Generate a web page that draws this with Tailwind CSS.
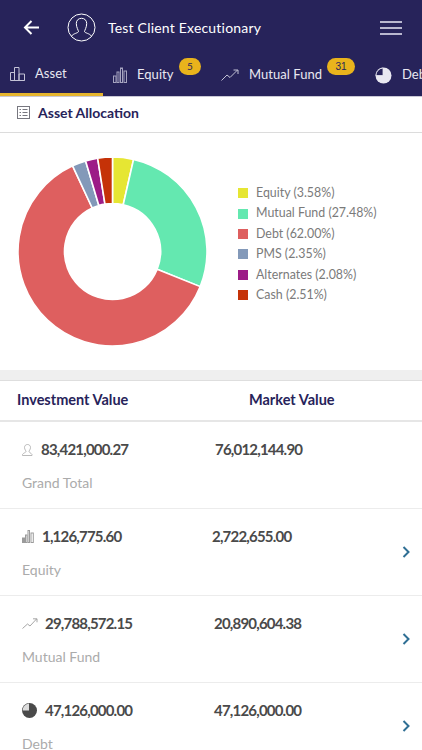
<!DOCTYPE html>
<html>
<head>
<meta charset="utf-8">
<script src="https://cdn.jsdelivr.net/npm/@tailwindcss/browser@4"></script>
</head>
<body class="bg-white font-['Lato',sans-serif] overflow-hidden">
<div class="w-[422px] h-[750px] overflow-hidden flex flex-col">
  <header class="h-[97px] shrink-0 bg-[#27235a] border-b border-[#c9c8d6] flex flex-col">
    <div class="h-[55px] flex items-center pl-[23px] pr-[20px] text-white">
      <svg class="w-[17px] h-[17px] mr-[27px]" viewBox="0 0 17 17" fill="none" stroke="#fff" stroke-width="2"><path d="M16 8.500H2M8.500 2L2 8.500L8.500 15"/></svg>
      <svg class="w-[29px] h-[29px] mr-[12px]" viewBox="0 0 29 29" fill="none" stroke="#fff" stroke-width="1"><circle cx="14.500" cy="14.500" r="13.500"/><path d="M11.500 18.500c0-1-2.200-4-2.200-8 0-3.200 2.200-5.200 5.200-5.200s5.200 2 5.200 5.200c0 4-2.200 7-2.200 8 0 1.500 5.500 2 6.800 4.500M11.500 18.500c0 1.500-5.500 2-6.800 4.500"/></svg>
      <span class="text-[14px] tracking-[0.2px] flex-1 whitespace-nowrap">Test Client Executionary</span>
      <div class="w-[22px] flex flex-col gap-[4px]">
        <div class="h-[2px] bg-[#b9b7cf]"></div><div class="h-[2px] bg-[#b9b7cf]"></div><div class="h-[2px] bg-[#b9b7cf]"></div>
      </div>
    </div>
    <nav class="h-[41px] flex text-[#e9e8f1] text-[13px] tracking-[0.05px] whitespace-nowrap overflow-hidden">
      <div class="w-[103px] shrink-0 h-full border-b-[3px] border-[#e6b52e] flex items-center pl-[10px] pb-[1px]">
        <svg class="w-[15px] h-[15px] mr-[10px]" viewBox="0 0 15 15" fill="none" stroke="#c4c3d6" stroke-width="1"><path d="M.5 14.500v-8h4v8M4.500 14.500V1.500h4.500v13M9 14.500V8h5.500v6.500zM.5 14.500h14"/></svg>
        <span>Asset</span>
      </div>
      <div class="w-[117px] shrink-0 flex items-center relative pl-[10px] pb-[1px]">
        <svg class="w-[14px] h-[16px] mr-[10px]" viewBox="0 0 14 16" fill="none" stroke="#a6a4c0" stroke-width="1"><rect x=".5" y="9" width="2.500" height="6.500"/><rect x="4" y="5" width="2" height="10.500"/><rect x="7.500" y="1" width="2" height="14.500"/><rect x="11" y="4" width="2.500" height="11.500"/></svg>
        <span>Equity</span>
        <span class="absolute left-[76px] top-[3px] w-[22px] h-[17px] rounded-full bg-[#e9b31c] text-[#27235a] text-[10px] tracking-normal flex items-center justify-center">5</span>
      </div>
      <div class="w-[155px] shrink-0 flex items-center relative pl-[1px] pb-[1px]">
        <svg class="w-[18px] h-[12px] mr-[10px]" viewBox="0 0 18 12" fill="none" stroke="#c4c3d6" stroke-width="1"><path d="M.5 11.500L6 6l3 2.500L16.500 1M12.500 1h4.500v4"/></svg>
        <span>Mutual Fund</span>
        <span class="absolute left-[107px] top-[3px] w-[28px] h-[17px] rounded-full bg-[#e9b31c] text-[#27235a] text-[10px] tracking-normal flex items-center justify-center font-['Liberation_Sans',sans-serif]">31</span>
      </div>
      <div class="shrink-0 flex items-center pb-[1px]">
        <svg class="w-[17px] h-[17px] mr-[10px]" viewBox="0 0 17 17"><circle cx="8.500" cy="8.500" r="8" fill="#e9e8f1"/><path d="M8 1v7.500H1A7.500 7.500 0 0 1 8 1z" fill="#27235a" stroke="#e9e8f1" stroke-width=".8"/></svg>
        <span>Debt</span>
      </div>
    </nav>
  </header>

  <section class="h-[36px] shrink-0 border-b border-[#dcdcdc] flex items-center pl-[17px] pb-[4px]">
    <svg class="w-[13px] h-[13px] mr-[8px]" viewBox="0 0 13 13" fill="none" stroke="#77777f" stroke-width="1"><rect x=".5" y=".5" width="12" height="12"/><path d="M2.500 3.500h1.500M5.500 3.500h5M2.500 6.500h1.500M5.500 6.500h5M2.500 9.500h1.500M5.500 9.500h5"/></svg>
    <h2 class="text-[14px] font-bold text-[#27235a]">Asset Allocation</h2>
  </section>

  <section class="h-[237px] shrink-0 flex items-start pt-[24px] pl-[18px]">
    <svg class="w-[189px] h-[189px] shrink-0" viewBox="-94.500 -94.500 189 189">
      <g stroke="#fff" stroke-width="1.600" stroke-linejoin="round">
        <path fill="#e6e633" d="M0 -94.500A94.500 94.500 0 0 1 21.080 -92.120L10.710 -46.790A48 48 0 0 0 0 -48Z"/>
        <path fill="#64e8b0" d="M21.080 -92.120A94.500 94.500 0 0 1 87.730 35.130L44.560 17.840A48 48 0 0 0 10.710 -46.790Z"/>
        <path fill="#de5f5f" d="M87.730 35.130A94.500 94.500 0 1 1 -39.900 -85.660L-20.270 -43.510A48 48 0 1 0 44.560 17.840Z"/>
        <path fill="#8399b9" d="M-39.900 -85.660A94.500 94.500 0 0 1 -26.880 -90.600L-13.650 -46.020A48 48 0 0 0 -20.270 -43.510Z"/>
        <path fill="#9c1c87" d="M-26.880 -90.600A94.500 94.500 0 0 1 -14.850 -93.330L-7.540 -47.400A48 48 0 0 0 -13.650 -46.020Z"/>
        <path fill="#c53208" d="M-14.850 -93.330A94.500 94.500 0 0 1 0 -94.500L0 -48A48 48 0 0 0 -7.540 -47.400Z"/>
      </g>
    </svg>
    <ul class="ml-[31px] mt-[26px] font-['Lato',sans-serif] text-[12.400px] leading-[20.400px] text-[#7a7a7a] whitespace-nowrap">
      <li class="flex items-center"><span class="w-[10px] h-[10px] bg-[#e6e633] mr-[8px]"></span>Equity (3.58%)</li>
      <li class="flex items-center"><span class="w-[10px] h-[10px] bg-[#64e8b0] mr-[8px]"></span>Mutual Fund (27.48%)</li>
      <li class="flex items-center"><span class="w-[10px] h-[10px] bg-[#de5f5f] mr-[8px]"></span>Debt (62.00%)</li>
      <li class="flex items-center"><span class="w-[10px] h-[10px] bg-[#8399b9] mr-[8px]"></span>PMS (2.35%)</li>
      <li class="flex items-center"><span class="w-[10px] h-[10px] bg-[#9c1c87] mr-[8px]"></span>Alternates (2.08%)</li>
      <li class="flex items-center"><span class="w-[10px] h-[10px] bg-[#c53208] mr-[8px]"></span>Cash (2.51%)</li>
    </ul>
  </section>

  <div class="h-[11px] shrink-0 bg-[#efefef] border-b border-[#dedede]"></div>

  <div class="h-[41px] shrink-0 border-b-2 border-[#e6e6e6] flex items-center pb-[1px] text-[14.500px] font-bold text-[#27235a]">
    <span class="ml-[17px] w-[232px]">Investment Value</span>
    <span>Market Value</span>
  </div>

  <div class="h-[87px] shrink-0 border-b border-[#ececec] flex flex-col pl-[22px] pt-[18px]">
    <div class="flex items-center text-[15px] font-bold tracking-[-0.8px] text-[#4a4a4a] h-[19px]">
      <svg class="w-[11px] h-[12px] mr-[8px]" viewBox="0 0 11 12" fill="none" stroke="#a8a8a8" stroke-width=".8"><path d="M4 7.500c0-.8-1.500-2-1.500-4C2.500 1.700 3.800.5 5.500.5s3 1.200 3 3c0 2-1.500 3.200-1.500 4 0 1 2 1.300 3 3v1H.5v-1c1-1.700 3.500-2 3.500-3z"/></svg>
      <span class="w-[174px]">83,421,000.27</span><span>76,012,144.90</span>
    </div>
    <div class="mt-[13px] text-[14px] text-[#ababab]">Grand Total</div>
  </div>

  <div class="h-[87px] shrink-0 border-b border-[#ececec] flex items-center">
    <div class="flex-1 flex flex-col self-start pl-[22px] pt-[18px]">
      <div class="flex items-center text-[15px] font-bold tracking-[-0.8px] text-[#4a4a4a] h-[19px]">
        <svg class="w-[12px] h-[13px] mr-[8px]" viewBox="0 0 12 13" fill="none" stroke="#9b9b9b" stroke-width="1"><rect x=".5" y="8" width="2" height="4.500" fill="#9b9b9b"/><rect x="3.500" y="5" width="1.500" height="7.500"/><rect x="6" y=".5" width="1.500" height="12"/><rect x="9" y="3" width="2.300" height="9.500"/></svg>
        <span class="w-[170px]">1,126,775.60</span><span>2,722,655.00</span>
      </div>
      <div class="mt-[13px] text-[14px] text-[#ababab]">Equity</div>
    </div>
    <svg class="w-[8px] h-[12px] mr-[12px] mb-[1px]" viewBox="0 0 8 12" fill="none" stroke="#2f6f94" stroke-width="2"><path d="M1.500 1l5 5-5 5"/></svg>
  </div>

  <div class="h-[87px] shrink-0 border-b border-[#ececec] flex items-center">
    <div class="flex-1 flex flex-col self-start pl-[22px] pt-[18px]">
      <div class="flex items-center text-[15px] font-bold tracking-[-0.8px] text-[#4a4a4a] h-[19px]">
        <svg class="w-[16px] h-[11px] mr-[7px]" viewBox="0 0 16 11" fill="none" stroke="#8f8f8f" stroke-width=".8"><path d="M.5 10.500L5.500 6l2.500 2L14.500 1M11 .8h4v3.500"/></svg>
        <span class="w-[169px]">29,788,572.15</span><span>20,890,604.38</span>
      </div>
      <div class="mt-[13px] text-[14px] text-[#ababab]">Mutual Fund</div>
    </div>
    <svg class="w-[8px] h-[12px] mr-[12px] mb-[1px]" viewBox="0 0 8 12" fill="none" stroke="#2f6f94" stroke-width="2"><path d="M1.500 1l5 5-5 5"/></svg>
  </div>

  <div class="h-[87px] shrink-0 flex items-center">
    <div class="flex-1 flex flex-col self-start pl-[22px] pt-[18px]">
      <div class="flex items-center text-[15px] font-bold tracking-[-0.8px] text-[#4a4a4a] h-[19px]">
        <svg class="w-[15px] h-[15px] mr-[8px]" viewBox="0 0 15 15"><circle cx="7.500" cy="7.500" r="7.500" fill="#4a4a4a"/><path d="M7 .6v6.900H.6A7 7 0 0 1 7 .6z" fill="#ddd"/></svg>
        <span class="w-[169px]">47,126,000.00</span><span>47,126,000.00</span>
      </div>
      <div class="mt-[13px] text-[14px] text-[#ababab]">Debt</div>
    </div>
    <svg class="w-[8px] h-[12px] mr-[12px] mb-[1px]" viewBox="0 0 8 12" fill="none" stroke="#2f6f94" stroke-width="2"><path d="M1.500 1l5 5-5 5"/></svg>
  </div>
</div>
</body>
</html>
